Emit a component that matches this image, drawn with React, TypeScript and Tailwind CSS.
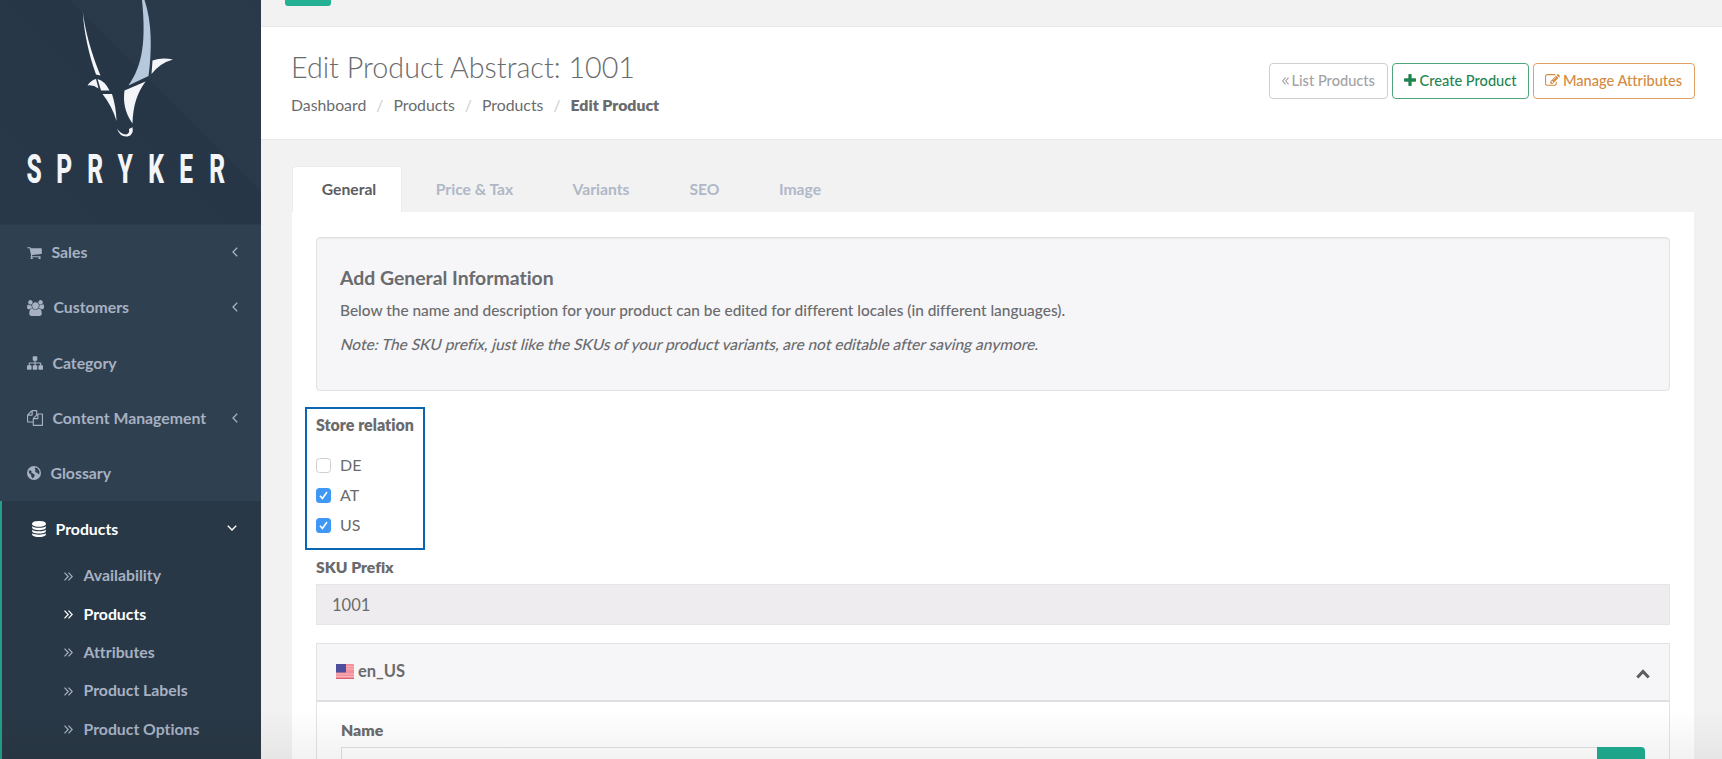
import React from "react";

type IconProps = { d: string; vb?: string; className?: string };
const Icon = ({ d, vb = "0 0 1792 1792", className }: IconProps) => (
  <svg viewBox={vb} className={className} fill="currentColor" aria-hidden="true">
    <path fillRule="evenodd" d={d} />
  </svg>
);

const CART =
  "M704 1536q0 52-38 90t-90 38-90-38-38-90 38-90 90-38 90 38 38 90zm896 0q0 52-38 90t-90 38-90-38-38-90 38-90 90-38 90 38 38 90zm128-1088v512q0 24-16.5 42.5t-40.5 21.5l-1044 122q13 60 13 70 0 16-24 64h920q26 0 45 19t19 45-19 45-45 19h-1024q-26 0-45-19t-19-45q0-11 8-31.5t16-36 21.5-40 15.5-29.5l-177-823h-204q-26 0-45-19t-19-45 19-45 45-19h256q16 0 28.5 6.5t19.5 15.5 13 24.5 8 26 5.5 29.5 4.5 26h1201q26 0 45 19t19 45z";
const USERS =
  "M657 896q-162 5-265 128h-134q-82 0-138-40.5t-56-118.5q0-353 124-353 6 0 43.5 21t97.5 42.5 119 21.5q67 0 133-23-5 37-5 66 0 159 93 293zm1071 637q0 120-73 189.5t-194 69.5h-874q-121 0-194-69.5t-73-189.5q0-53 3.5-103.5t14-109 26.5-108.5 43-97.5 62-81 85.5-53.5 111.5-20q10 0 43 21.5t73 48 107 48 135 21.5 135-21.5 107-48 73-48 43-21.5q61 0 111.5 20t85.5 53.5 62 81 43 97.5 26.5 108.5 14 109 3.5 103.5zm-1024-1277q0 106-75 181t-181 75-181-75-75-181 75-181 181-75 181 75 75 181zm704 384q0 159-112.5 271.5t-271.5 112.5-271.5-112.5-112.5-271.5 112.5-271.5 271.5-112.5 271.5 112.5 112.5 271.5zm576 225q0 78-56 118.5t-138 40.5h-134q-103-123-265-128 93-134 93-293 0-29-5-66 66 23 133 23 59 0 119-21.5t97.5-42.5 43.5-21q124 0 124 353zm-128-609q0 106-75 181t-181 75-181-75-75-181 75-181 181-75 181 75 75 181z";
const SITEMAP =
  "M1792 1248v320q0 40-28 68t-68 28h-320q-40 0-68-28t-28-68v-320q0-40 28-68t68-28h96v-192h-512v192h96q40 0 68 28t28 68v320q0 40-28 68t-68 28h-320q-40 0-68-28t-28-68v-320q0-40 28-68t68-28h96v-192h-512v192h96q40 0 68 28t28 68v320q0 40-28 68t-68 28h-320q-40 0-68-28t-28-68v-320q0-40 28-68t68-28h96v-192q0-52 38-90t90-38h512v-192h-96q-40 0-68-28t-28-68v-320q0-40 28-68t68-28h320q40 0 68 28t28 68v320q0 40-28 68t-68 28h-96v192h512q52 0 90 38t38 90v192h96q40 0 68 28t28 68z";
const FILES =
  "M1696 384q40 0 68 28t28 68v1216q0 40-28 68t-68 28h-960q-40 0-68-28t-28-68v-288h-544q-40 0-68-28t-28-68v-672q0-40 20-88t48-76l408-408q28-28 76-48t88-20h416q40 0 68 28t28 68v328q68-40 128-40h416zm-544 213l-299 299h299v-299zm-640-384l-299 299h299v-299zm196 647l316-316v-416h-384v416q0 40-28 68t-68 28h-416v640h512v-256q0-40 20-88t48-76zm956 804v-1152h-384v416q0 40-28 68t-68 28h-416v640h896z";
const DATABASE =
  "M896 768q237 0 443-43t325-127v170q0 69-103 128t-280 93.5-385 34.5-385-34.5-280-93.5-103-128v-170q119 84 325 127t443 43zm0 768q237 0 443-43t325-127v170q0 69-103 128t-280 93.5-385 34.5-385-34.5-280-93.5-103-128v-170q119 84 325 127t443 43zm0-384q237 0 443-43t325-127v170q0 69-103 128t-280 93.5-385 34.5-385-34.5-280-93.5-103-128v-170q119 84 325 127t443 43zm0-1152q208 0 385 34.5t280 93.5 103 128v128q0 69-103 128t-280 93.5-385 34.5-385-34.5-280-93.5-103-128v-128q0-69 103-128t280-93.5 385-34.5z";
const EDIT =
  "M888 1184l116-116-152-152-116 116v56h96v96h56zm440-720q-16-16-33 1l-350 350q-17 17-1 33t33-1l350-350q17-17 1-33zm80 594v190q0 119-84.5 203.5t-203.5 84.5h-832q-119 0-203.5-84.5t-84.5-203.5v-832q0-119 84.5-203.5t203.5-84.5h832q63 0 117 25 15 7 18 23 3 17-9 29l-49 49q-14 14-32 8-23-6-45-6h-832q-66 0-113 47t-47 113v832q0 66 47 113t113 47h832q66 0 113-47t47-113v-126q0-13 9-22l64-64q15-15 35-7t20 29zm-96-738l288 288-672 672h-288v-288zm444 132l-92 92-288-288 92-92q28-28 68-28t68 28l152 152q28 28 28 68t-28 68z";
const PLUS =
  "M1600 736v192q0 40-28 68t-68 28h-416v416q0 40-28 68t-68 28h-192q-40 0-68-28t-28-68v-416h-416q-40 0-68-28t-28-68v-192q0-40 28-68t68-28h416v-416q0-40 28-68t68-28h192q40 0 68 28t28 68v416h416q40 0 68 28t28 68z";
const GLOBE =
  "M8 0a8 8 0 1 1 0 16a8 8 0 0 1 0-16zM3.4 4.6L2 6.2L2.6 8.4L4.6 9.6L4.8 11.6L6.2 14L7.4 13.4L8.8 11L8.6 9.6L6.4 8.4L5 7.8L5.4 6.4zM9.6 1.8L8.6 3.2L9.8 4.4L9.2 5.8L10 7.4L12.2 8L13 10L14.2 8.4L14.3 6.2L13 3.6L11.4 2.2z";

const AngleLeft = () => (
  <svg viewBox="0 0 6 10" className="mb-px h-[10px] w-[6px]" fill="none" stroke="currentColor" strokeWidth="1.3">
    <path d="M5.2 .8L1 5l4.2 4.2" />
  </svg>
);
const AngleDown = () => (
  <svg viewBox="0 0 10 6" className="mb-px h-[6px] w-[10px]" fill="none" stroke="currentColor" strokeWidth="1.4">
    <path d="M.8 .8L5 5 9.2 .8" />
  </svg>
);

function Antelope() {
  return (
    <svg viewBox="0 0 261 145" className="block h-[145px] w-[261px]" fill="#f3f5f9">
      <path d="M82.8 12C85 28 89 47 100.5 75.5L96 74.5C89 55 84 33 82.8 12z" />
      <path d="M142 0H144.5C152 22 152 50 148.5 76L128.5 85.5C143 65 146 40 142 0z" fill="#b5c8dc" />
      <path d="M152.5 60.5Q162 57 173 59.5Q160 63 151.5 74z" />
      <path d="M87.5 85.5Q91 80 96 79L98.5 88.5Q93 84.5 87.5 85.5z" />
      <path d="M97.5 79Q105 81 109.5 90.5H101z" />
      <path d="M102.5 94H112Q116 106 116.5 121Q112 106 102.5 94z" />
      <path d="M124.5 90.5L145.5 81.5C137 93 133 106 132.5 123.5C124.500 112 123 101 124.500 90.500z" />
      <path d="M117 128.500Q120.500 134 126 134.500Q130 133.500 129 129L132.500 127.200Q134 135 127.500 136.500Q120 137.500 117 128.500z" />
    </svg>
  );
}

const NAV = [
  { label: "Sales", d: CART, vb: "64 128 1664 1536", icon: "h-[13.5px] w-[15px]", angle: true },
  { label: "Customers", d: USERS, vb: "64 0 1920 1792", icon: "h-[16px] w-[17px]", angle: true },
  { label: "Category", d: SITEMAP, vb: "0 128 1792 1536", icon: "h-[14px] w-[16px]", angle: false },
  { label: "Content Management", d: FILES, vb: "0 0 1792 1792", icon: "h-[16px] w-[16px]", angle: true },
  { label: "Glossary", d: GLOBE, vb: "0 0 16 16", icon: "h-[14px] w-[14px]", angle: false },
];
const SUB = ["Availability", "Products", "Attributes", "Product Labels", "Product Options"];

function Sidebar() {
  return (
    <aside className="relative flex h-full w-[261px] shrink-0 flex-col bg-[#2f4050] text-[15.8px] font-bold text-[#a7b1c2]">
      <div className="flex h-[225px] shrink-0 flex-col border-b border-[#2c3c4c] bg-[linear-gradient(45deg,#283848_0%,#263646_60%,#2a3a4a_61%,#2a3949_100%)]">
        <Antelope />
        <div className="mt-[4px] grid h-[40px] grid-cols-7 pr-[29px] pl-[19px] text-center font-['Roboto'] text-[41px] leading-[40px] font-extrabold text-[#f3f5f9]">
          {"SPRYKER".split("").map((c, i) => (
            <span key={i} className="block scale-x-[0.6]">{c}</span>
          ))}
        </div>
      </div>
      <nav className="flex flex-col">
        {NAV.map((n) => (
          <a key={n.label} className="flex h-[55.2px] items-center gap-[9.500px] pr-[23px] pl-[27px]">
            <Icon d={n.d} vb={n.vb} className={n.icon} />
            <span className="grow pb-px">{n.label}</span>
            {n.angle && <AngleLeft />}
          </a>
        ))}
      </nav>
      <div className="flex grow flex-col border-l-2 border-[#23a085] bg-[#293846]">
        <a className="flex h-[56px] items-center gap-[9.500px] pr-[24px] pl-[30px] text-white">
          <Icon d={DATABASE} vb="128 0 1536 1792" className="h-[16px] w-[14px]" />
          <span className="grow pb-px">Products</span>
          <AngleDown />
        </a>
        {SUB.map((s, i) => (
          <a key={s} className={`flex h-[38.4px] items-center gap-[10.500px] pl-[62px] ${i === 1 ? "text-white" : ""}`}>
            <svg viewBox="0 0 9 9" className="h-[9px] w-[9px]" fill="none" stroke="currentColor" strokeWidth="1.2">
              <path d="M.5 .7L4.200 4.500L.5 8.300M4.500 .7L8.200 4.500L4.500 8.300" />
            </svg>
            <span className="pb-[2px]">{s}</span>
          </a>
        ))}
      </div>
    </aside>
  );
}

const Sep = () => <span className="px-[10px] text-[#ccc]">/</span>;

function Heading() {
  return (
    <header className="flex h-[113px] shrink-0 items-start justify-between border-b border-[#e9e9ea] bg-white pr-[27px] pl-[30px]">
      <div className="pt-[22px]">
        <h1 className="h-[36px] text-[28.700px] leading-[36px] font-light">Edit Product Abstract: 1001</h1>
        <div className="mt-[8px] flex h-[24px] items-center text-[15.8px]">
          <span>Dashboard</span><Sep />
          <span>Products</span><Sep />
          <span>Products</span><Sep />
          <b className="font-extrabold">Edit Product</b>
        </div>
      </div>
      <div className="mt-[36px] flex gap-[4px] text-[14.600px] leading-[34px] font-medium">
        <a className="flex h-[36px] w-[119.500px] items-center justify-center gap-[3px] rounded-[4px] border border-[#cfcfd0] text-[#a3a3a5]">
          <svg viewBox="0 0 8 9" className="h-[8px] w-[7px]" fill="none" stroke="currentColor" strokeWidth="1.3">
            <path d="M4 .7L.8 4.500L4 8.300M7.500 .7L4.300 4.500L7.500 8.300" />
          </svg>
          List Products
        </a>
        <a className="flex h-[36px] w-[137px] items-center justify-center gap-[3px] rounded-[4px] border-[1.500px] border-[#4fa57a] text-[#1f8550]">
          <Icon d={PLUS} vb="192 128 1408 1408" className="mb-[2px] h-[12px] w-[12px]" />
          Create Product
        </a>
        <a className="flex h-[36px] w-[162px] items-center justify-center gap-[3px] rounded-[4px] border-[1.500px] border-[#e0a060] pr-px text-[#d48a3f]">
          <Icon d={EDIT} vb="0 128 1792 1536" className="mb-[2px] h-[13px] w-[15px]" />
          Manage Attributes
        </a>
      </div>
    </header>
  );
}

function Check({ label, on }: { label: string; on?: boolean }) {
  return (
    <label className="flex h-[30px] items-center gap-[9px] text-[16px]">
      {on ? (
        <span className="flex h-[15px] w-[15px] items-center justify-center rounded-[3.500px] bg-[#3f97f6]">
          <svg viewBox="0 0 11 11" className="h-[11px] w-[11px]" fill="none" stroke="#fff" strokeWidth="1.600">
            <path d="M2 5.800L4.400 8.500L9 2" />
          </svg>
        </span>
      ) : (
        <span className="h-[15px] w-[15px] rounded-[3.500px] border border-[#cfcfcf] bg-white" />
      )}
      {label}
    </label>
  );
}

const Flag = () => (
  <svg viewBox="0 0 18 15" className="mb-[2px] h-[15px] w-[18px]">
    <rect width="18" height="15" rx="1" fill="#f3909c" />
    <path d="M9 2.500H18M9 5H18M0 10H18M0 12.500H18" stroke="#f9b4bb" strokeWidth="1" />
    <path d="M0 14.500H18" stroke="#d9636f" strokeWidth="1" />
    <rect width="10" height="8.500" fill="#4d4f9c" />
  </svg>
);

function Panel() {
  return (
    <section className="mr-[28px] ml-[31px] flex grow flex-col">
      <div className="mt-[26px] flex h-[46px] shrink-0 text-[15.700px] font-bold text-[#b0b8c7]">
        <span className="mr-px flex w-[110px] items-center justify-center rounded-t-[4px] border border-b-0 border-[#ececed] bg-white pl-[4px] text-[#5c5d5f]">General</span>
        <span className="flex w-[143px] items-center justify-center pt-px">Price &amp; Tax</span>
        <span className="flex w-[110px] items-center justify-center pt-px">Variants</span>
        <span className="flex w-[97px] items-center justify-center pt-px">SEO</span>
        <span className="flex w-[94px] items-center justify-center pt-px">Image</span>
      </div>
      <div className="relative flex grow flex-col bg-white pt-[25px] pr-[24px] pl-[24px]">
        <div className="h-[154px] shrink-0 rounded-[4px] border border-[#e3e3e6] bg-[#f6f5f8] pt-[26px] pl-[23px] shadow-[inset_0_1px_1px_rgba(0,0,0,0.06)]">
          <h2 className="h-[28px] text-[19.400px] leading-[28px] font-bold">Add General Information</h2>
          <p className="mt-[6px] h-[24px] text-[15.430px] leading-[24px] font-medium">
            Below the name and description for your product can be edited for different locales (in different languages).
          </p>
          <p className="mt-[10px] h-[24px] origin-[0_17px] -skew-x-[14deg] text-[15.430px] leading-[24px] font-medium">
            Note: The SKU prefix, just like the SKUs of your product variants, are not editable after saving anymore.
          </p>
        </div>
        <div className="mt-[22px] h-[24px] shrink-0 text-[16px] leading-[24px] font-extrabold">Store relation</div>
        <div className="mt-[13px] flex flex-col">
          <Check label="DE" />
          <Check label="AT" on />
          <Check label="US" on />
        </div>
        <div className="mt-[15px] h-[24px] shrink-0 text-[15.700px] leading-[24px] font-extrabold">SKU Prefix</div>
        <div className="mt-[5px] flex h-[41px] shrink-0 items-center border border-[#e6e5e8] bg-[#eeecef] pt-[2px] pl-[15px] text-[16.500px]">1001</div>
        <div className="mt-[18px] flex grow flex-col border border-b-0 border-[#e3e3e5]">
          <div className="flex h-[58px] shrink-0 items-center border-b-2 border-[#dfdfe1] bg-[#f6f5f8] pr-[19px] pl-[19px]">
            <Flag />
            <span className="grow pb-px pl-[4px] text-[16.500px] font-bold">en_US</span>
            <svg viewBox="0 0 14 10" className="mt-[4px] h-[10px] w-[14px]" fill="none" stroke="#5c5d5f" strokeWidth="3">
              <path d="M1.300 8.500L7 2.500L12.700 8.500" />
            </svg>
          </div>
          <div className="flex grow flex-col pr-[24px] pl-[24px]">
            <div className="mt-[16px] h-[24px] text-[15.800px] leading-[24px] font-extrabold">Name</div>
            <div className="mt-[5px] flex h-[14px]">
              <div className="grow border-t border-l border-[#e0e0e2]" />
              <div className="w-[48px] rounded-tr-[4px] bg-[#1fad90]" />
            </div>
          </div>
        </div>
        <div className="absolute top-[195px] left-[13px] h-[143px] w-[120px] border-2 border-[#0a66b3]" />
      </div>
    </section>
  );
}

export default function App() {
  return (
    <div className="relative flex h-[759px] w-[1722px] overflow-hidden bg-[#f2f2f3] font-['Lato',sans-serif] text-[#6a6b6d] [font-variant-ligatures:none]">
      <Sidebar />
      <main className="flex h-full grow flex-col">
        <div className="h-[27px] shrink-0 border-b border-[#e9e9ea] pl-[24px]">
          <div className="h-[6px] w-[46px] rounded-b-[3px] bg-[#24b093]" />
        </div>
        <Heading />
        <Panel />
      </main>
      <div className="pointer-events-none absolute inset-x-0 bottom-0 h-[50px] bg-linear-to-b from-transparent to-black/5" />
    </div>
  );
}
